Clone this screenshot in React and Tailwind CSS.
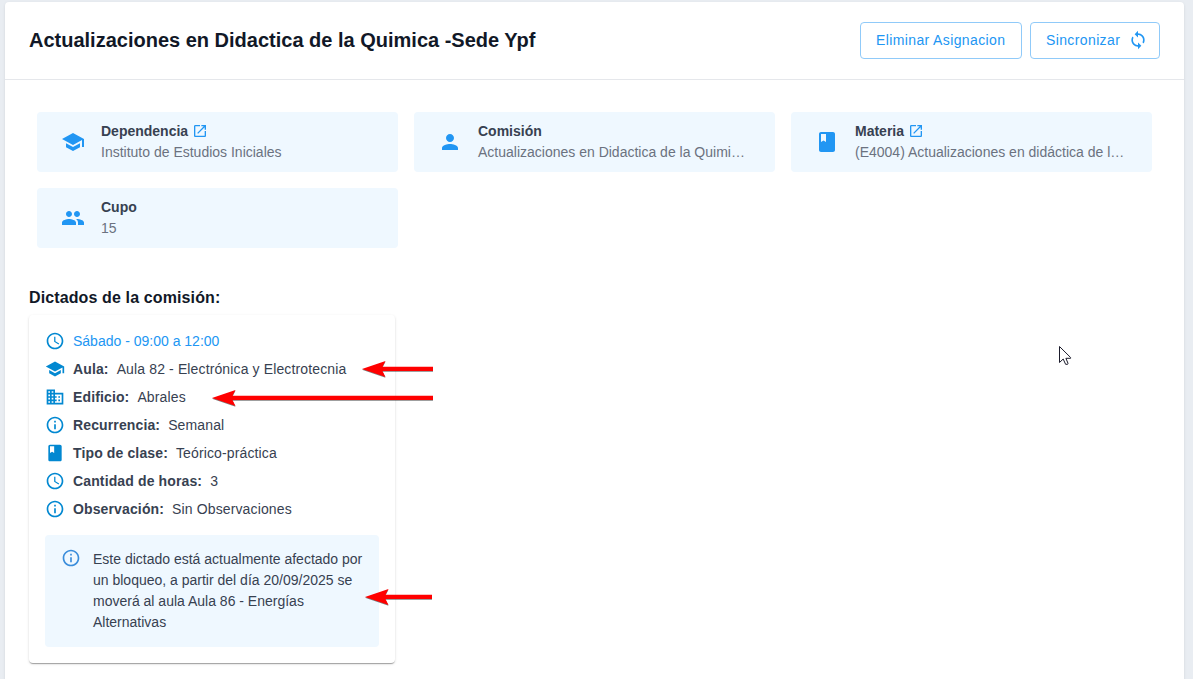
import React from 'react';

const PATHS = {
  school: 'M5 13.18v4L12 21l7-3.82v-4L12 17l-7-3.82zM12 3 1 9l11 6 9-4.91V17h2V9L12 3z',
  person: 'M12 12c2.21 0 4-1.79 4-4s-1.79-4-4-4-4 1.79-4 4 1.79 4 4 4zm0 2c-2.67 0-8 1.34-8 4v2h16v-2c0-2.66-5.33-4-8-4z',
  people:
    'M16 11c1.66 0 2.99-1.34 2.99-3S17.66 5 16 5c-1.66 0-3 1.34-3 3s1.34 3 3 3zm-8 0c1.66 0 2.99-1.34 2.99-3S9.66 5 8 5C6.34 5 5 6.34 5 8s1.34 3 3 3zm0 2c-2.33 0-7 1.17-7 3.5V19h14v-2.5c0-2.33-4.67-3.5-7-3.5zm8 0c-.29 0-.62.02-.97.05 1.16.84 1.97 1.97 1.97 3.45V19h6v-2.5c0-2.33-4.67-3.5-7-3.5z',
  book: 'M18 2H6c-1.1 0-2 .9-2 2v16c0 1.1.9 2 2 2h12c1.1 0 2-.9 2-2V4c0-1.1-.9-2-2-2zM6 4h5v8l-2.5-1.5L6 12V4z',
  open: 'M19 19H5V5h7V3H5c-1.11 0-2 .9-2 2v14c0 1.1.89 2 2 2h14c1.1 0 2-.9 2-2v-7h-2v7zM14 3v2h3.59l-9.83 9.83 1.41 1.41L19 6.41V10h2V3h-7z',
  sync: 'M12 4V1L8 5l4 4V6c3.31 0 6 2.69 6 6 0 1.01-.25 1.97-.7 2.8l1.46 1.46C19.54 15.03 20 13.57 20 12c0-4.42-3.58-8-8-8zm0 14c-3.31 0-6-2.69-6-6 0-1.01.25-1.97.7-2.8L5.24 7.74C4.46 8.97 4 10.43 4 12c0 4.42 3.58 8 8 8v3l4-4-4-4v3z',
  clock:
    'M11.99 2C6.47 2 2 6.48 2 12s4.47 10 9.99 10C17.52 22 22 17.52 22 12S17.52 2 11.99 2zM12 20c-4.42 0-8-3.58-8-8s3.58-8 8-8 8 3.58 8 8-3.58 8-8 8zm.5-13H11v6l5.25 3.15.75-1.23-4.5-2.67z',
  business:
    'M12 7V3H2v18h20V7H12zM6 19H4v-2h2v2zm0-4H4v-2h2v2zm0-4H4V9h2v2zm0-4H4V5h2v2zm4 12H8v-2h2v2zm0-4H8v-2h2v2zm0-4H8V9h2v2zm0-4H8V5h2v2zm10 12h-8v-2h2v-2h-2v-2h2v-2h-2V9h8v10zm-2-8h-2v2h2v-2zm0 4h-2v2h2v-2z',
  info: 'M11 7h2v2h-2zm0 4h2v6h-2zm1-9C6.48 2 2 6.48 2 12s4.48 10 10 10 10-4.48 10-10S17.52 2 12 2zm0 18c-4.41 0-8-3.59-8-8s3.59-8 8-8 8 3.59 8 8-3.59 8-8 8z',
};

function Icon({ name, className }) {
  return (
    <svg viewBox="0 0 24 24" fill="currentColor" className={`shrink-0 ${className}`}>
      <path d={PATHS[name]} />
    </svg>
  );
}

const INFO = [
  { icon: 'school', label: 'Dependencia', value: 'Instituto de Estudios Iniciales', link: true },
  { icon: 'person', label: 'Comisión', value: 'Actualizaciones en Didactica de la Quimi…' },
  { icon: 'book', label: 'Materia', value: '(E4004) Actualizaciones en didáctica de l…', link: true },
  { icon: 'people', label: 'Cupo', value: '15' },
];

const DETAILS = [
  { icon: 'school', label: 'Aula:', value: 'Aula 82 - Electrónica y Electrotecnia' },
  { icon: 'business', label: 'Edificio:', value: 'Abrales' },
  { icon: 'info', label: 'Recurrencia:', value: 'Semanal' },
  { icon: 'book', label: 'Tipo de clase:', value: 'Teórico-práctica' },
  { icon: 'clock', label: 'Cantidad de horas:', value: '3' },
  { icon: 'info', label: 'Observación:', value: 'Sin Observaciones' },
];

function InfoCard({ icon, label, value, link }) {
  return (
    <div className="flex h-[60px] items-center rounded bg-[#eff8ff] pl-6">
      <Icon name={icon} className="size-6 text-[#2196f3]" />
      <div className="ml-4 min-w-0 text-sm leading-[21px] whitespace-nowrap">
        <div className="flex h-[21px] items-center font-bold text-[#374151]">
          {label}
          {link && <Icon name="open" className="mb-[1px] ml-1 size-4 text-[#2196f3]" />}
        </div>
        <div className="text-[#6b7280]">{value}</div>
      </div>
    </div>
  );
}

function Arrow({ className, width }) {
  const shape = `M0 8 L23.5 0 L20.5 5.8 H${width} V10 H20.5 L23.5 16 Z`;
  return (
    <svg className={`absolute ${className}`} width={width} height="17" viewBox={`0 0 ${width} 17`}>
      <path d={shape} transform="translate(0 0.8)" fill="#000000" fillOpacity="0.5" />
      <path d={shape} fill="#ff0000" />
    </svg>
  );
}

const BUTTON =
  'flex h-[37px] items-center rounded border border-[#90caf9] pb-0.5 pl-[15px] text-sm tracking-[0.38px] text-[#2196f3] whitespace-nowrap';

export default function App() {
  return (
    <div className="relative h-[679px] w-[1193px] overflow-hidden bg-[#e9edf2] pt-0.5 pr-[9px] pl-[5px] font-['Liberation_Sans',Arial,sans-serif]">
      <main className="h-[690px] rounded-t bg-white shadow-[0_1px_3px_rgba(0,0,0,0.1)]">
        <header className="flex h-[78px] items-center justify-between border-b border-[#e5e7eb] px-6">
          <h1 className="pb-0.5 text-xl leading-[30px] font-bold text-[#111827]">
            Actualizaciones en Didactica de la Quimica -Sede Ypf
          </h1>
          <div className="flex gap-2">
            <button className={`${BUTTON} w-[162px]`}>Eliminar Asignacion</button>
            <button className={`${BUTTON} w-[130px]`}>
              Sincronizar
              <Icon name="sync" className="ml-2 size-5" />
            </button>
          </div>
        </header>

        <section className="grid grid-cols-3 gap-4 px-8 pt-8">
          {INFO.map((item) => (
            <InfoCard key={item.label} {...item} />
          ))}
        </section>

        <section className="px-6 pt-[38px]">
          <h2 className="text-base leading-6 font-bold tracking-[0.12px] text-[#111827]">Dictados de la comisión:</h2>
          <article className="mt-[5px] h-[348px] w-[366px] rounded p-4 text-sm tracking-[0.13px] shadow-[0_2px_1px_-1px_rgba(0,0,0,0.2),0_1px_1px_0_rgba(0,0,0,0.14),0_1px_3px_0_rgba(0,0,0,0.12)]">
            <div className="-mt-1">
              <div className="flex h-7 items-center text-[#2196f3]">
                <Icon name="clock" className="mr-2 size-5 text-[#0288d1]" />
                <span className="tracking-normal">Sábado - 09:00 a 12:00</span>
              </div>
              {DETAILS.map((item) => (
                <div key={item.label} className="flex h-7 items-center text-[#374151]">
                  <Icon name={item.icon} className="mr-2 size-5 text-[#0288d1]" />
                  <span className="mr-2 font-bold">{item.label}</span>
                  <span>{item.value}</span>
                </div>
              ))}
            </div>
            <div className="mt-3 flex h-28 rounded bg-[#eff8ff] px-4 pt-3.5">
              <Icon name="info" className="mt-[-1px] mr-3 size-5 text-[#3a8ddb]" />
              <p className="w-[274px] shrink-0 leading-[21px] tracking-normal text-[#374151]">
                Este dictado está actualmente afectado por
                <br />
                un bloqueo, a partir del día 20/09/2025 se
                <br />
                moverá al aula Aula 86 - Energías
                <br />
                Alternativas
              </p>
            </div>
          </article>
        </section>
      </main>

      <Arrow className="top-[361px] left-[362px]" width={71} />
      <Arrow className="top-[390px] left-[212px]" width={221} />
      <Arrow className="top-[589px] left-[365px]" width={67} />
      <svg className="absolute top-[345px] left-[1058px]" width="14" height="21" viewBox="0 0 14 21">
        <path
          d="M1.5 1.5 V17.5 L5.2 14 L7.6 19.3 H9.6 L10 18.3 L7.9 13.3 H12.6 V12.5 Z"
          fill="#ffffff"
          stroke="#1b1b2b"
          strokeWidth="1"
        />
      </svg>
    </div>
  );
}
